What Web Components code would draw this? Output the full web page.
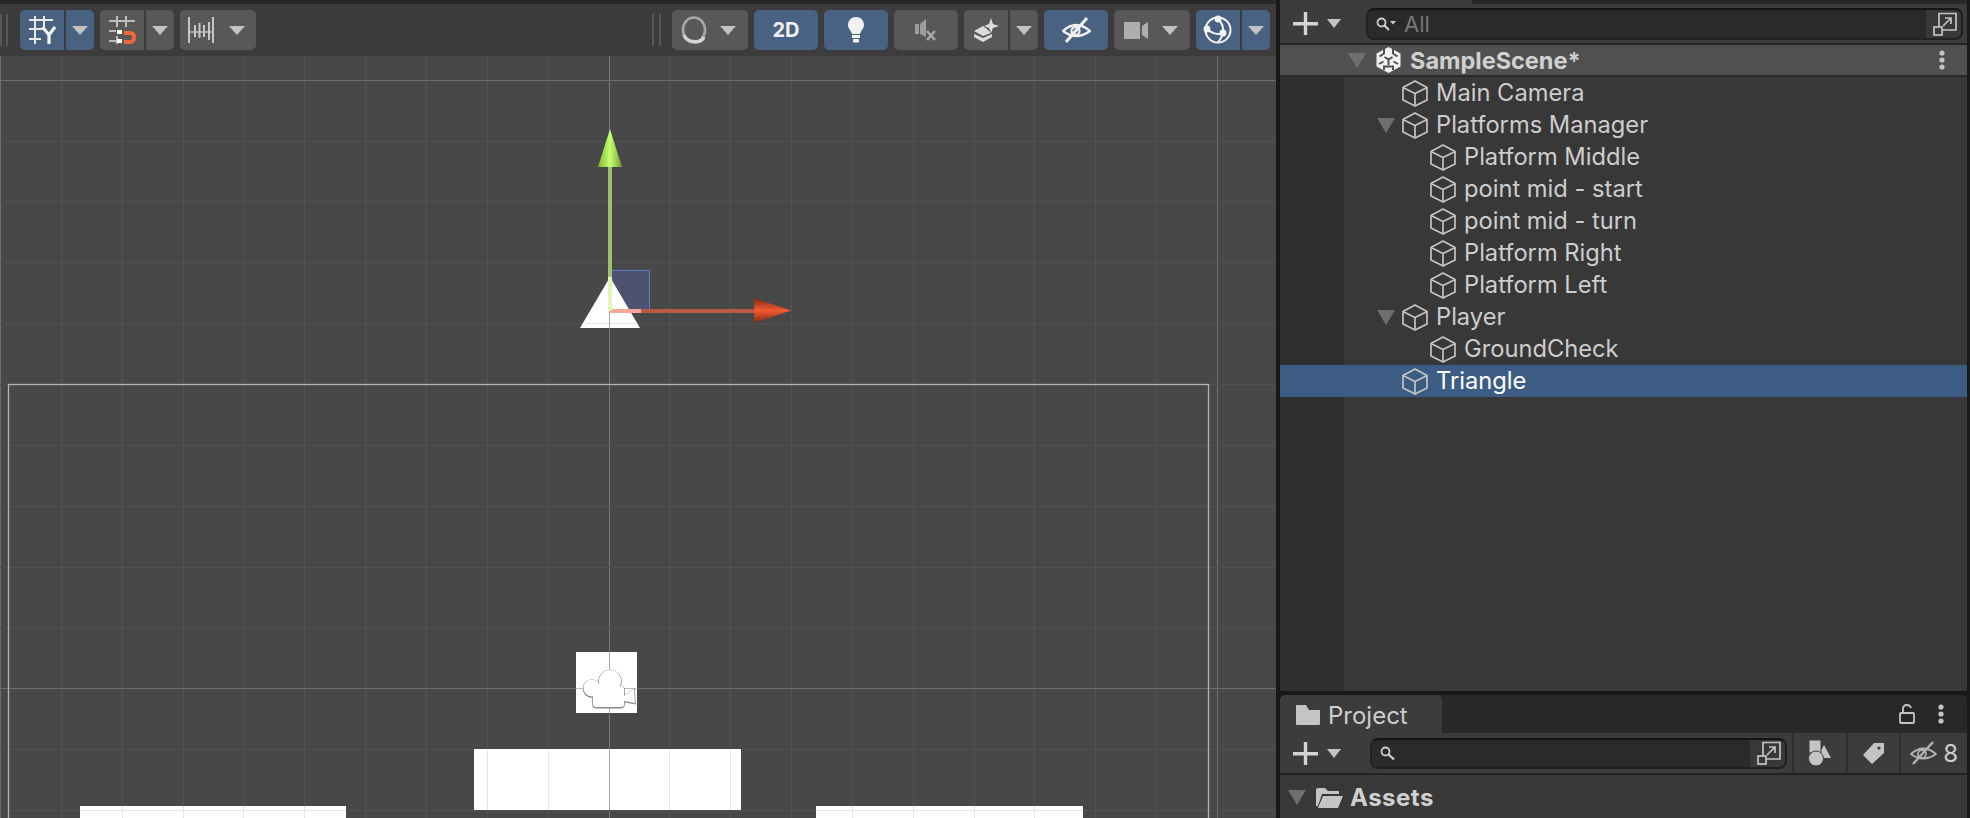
<!DOCTYPE html>
<html>
<head>
<meta charset="utf-8">
<style>
html, body { margin: 0; height: 100%; background: #191919; overflow: hidden; }
body { font-family: Inter, "Liberation Sans", sans-serif; }
unity-editor { width: 1970px; height: 818px; }
</style>
</head>
<body>
<unity-editor>
  <scene-panel slot="scene"></scene-panel>
  <hierarchy-panel slot="hierarchy"></hierarchy-panel>
  <project-panel slot="project"></project-panel>
</unity-editor>

<script>
const ICONS = {
    arrow: `<svg width="16" height="9" viewBox="0 0 16 9"><path d="M0 0H16L8 9Z" fill="#c2c2c2"/></svg>`,
    gridY: `<svg width="28" height="28" viewBox="0 0 28 28" fill="none" stroke="#e8e8e8" stroke-width="2"><path d="M1 4H25M1 13H15M1 23H13M7 0V28M16 0V11"/><path d="M14.5 11L21 19L27 11M21 19V28" stroke="#f4f4f4" stroke-width="3.2"/></svg>`,
    snap: `<svg width="28" height="28" viewBox="0 0 28 28" fill="none" stroke="#bdbdbd" stroke-width="2"><path d="M1 5H27M1 15H8M1 25H8M9 0V11M9 20V28M18 0V11"/><path d="M16 17H22Q26 17 26 21.5T22 26H16" stroke="#ee6a3a" stroke-width="4"/><path d="M9 14h5v4h-5zM9 23h5v4h-5z" fill="#fff" stroke="none"/></svg>`,
    ruler: `<svg width="26" height="26" viewBox="0 0 26 26" fill="none" stroke="#c6c6c6" stroke-width="2"><path d="M1 0V26M25 0V26"/><path d="M1 15H25" stroke-width="1.4"/><path d="M7 8V20M11.5 6V21M16 8V20M21 5V23"/></svg>`,
    shading: `<svg width="26" height="28" viewBox="0 0 26 28" fill="none"><ellipse cx="13" cy="14" rx="11" ry="12.5" stroke="#a8a8a8" stroke-width="2.6"/><path d="M3 19C6 27 20 28 23 21" stroke="#d4d4d4" stroke-width="3.4"/></svg>`,
    bulb: `<svg width="16" height="26" viewBox="0 0 16 26"><path d="M8 0C3.5 0 0 3.5 0 8C0 12 3 13 4 17H12C13 13 16 12 16 8C16 3.5 12.5 0 8 0Z" fill="#f2f2f2"/><rect x="4" y="18" width="8" height="3" fill="#f2f2f2"/><rect x="5" y="22" width="6" height="3.5" rx="1" fill="#f2f2f2"/></svg>`,
    mute: `<svg width="24" height="22" viewBox="0 0 24 22"><path d="M1 5H5V15H1ZM6 5L12 0V18L6 15Z" fill="#9c9c9c"/><path d="M13 12L21 21M21 12L13 21" stroke="#a8a8a8" stroke-width="2.6"/></svg>`,
    layers: `<svg width="25" height="24" viewBox="0 0 25 24"><path d="M17 0L19 6L25 8L19 10L17 15L15 10L10 8L15 6Z" fill="#dcdcdc"/><path d="M9 8L13 11L17 15L9 18L0 13Z" fill="#dcdcdc"/><path d="M0 16L9 20L18 16V19L9 24L0 19Z" fill="#dcdcdc"/></svg>`,
    hidden: `<svg width="29" height="26" viewBox="0 0 29 26" fill="none" stroke="#f0f0f0" stroke-width="2.3"><path d="M1 14Q14 2 28 14Q14 24 1 14Z"/><circle cx="13.5" cy="14" r="4"/><path d="M25 1L4 25" stroke-width="3"/></svg>`,
    camera: `<svg width="24" height="17" viewBox="0 0 24 17"><rect x="0" y="0" width="16" height="17" fill="#aeaeae"/><path d="M18 4L24 0V17L18 13Z" fill="#aeaeae"/></svg>`,
    gizmo: `<svg width="30" height="30" viewBox="0 0 30 30" fill="none" stroke="#f4f4f4" stroke-width="2"><circle cx="15" cy="15" r="12.5"/><path d="M15 4C19 8 21 13 20 18C16 20 9 19 4 14M20 18C19 22 17 25 15 27.5"/><g fill="#f4f4f4" stroke="none"><circle cx="15" cy="4" r="3.4"/><circle cx="4" cy="14" r="3.4"/><circle cx="20" cy="18" r="3.4"/></g></svg>`,
    plus: `<svg width="25" height="23" viewBox="0 0 25 23"><path d="M0 10H25V13.4H0ZM10.8 0H14.2V23H10.8Z" fill="#d4d4d4"/></svg>`,
    smallArrow: `<svg width="14" height="9" viewBox="0 0 14 9"><path d="M0 0H14L7 9Z" fill="#c4c4c4"/></svg>`,
    searchDrop: `<svg width="20" height="14" viewBox="0 0 20 14" fill="none"><circle cx="5.5" cy="5.5" r="4" stroke="#cfcfcf" stroke-width="1.8"/><path d="M8.5 8.5L13 13" stroke="#cfcfcf" stroke-width="2.2"/><path d="M14 4H20L17 7.5Z" fill="#cfcfcf"/></svg>`,
    search: `<svg width="15" height="14" viewBox="0 0 15 14" fill="none"><circle cx="5.5" cy="5.5" r="4" stroke="#cfcfcf" stroke-width="1.8"/><path d="M8.5 8.5L14 13.4" stroke="#cfcfcf" stroke-width="2.2"/></svg>`,
    maximize: `<svg width="24" height="24" viewBox="0 0 24 24" fill="none" stroke="#c4c4c4" stroke-width="1.7"><path d="M6 15V1.5H23V18H9"/><rect x="1" y="15" width="8" height="8"/><path d="M10 14L18 6M12 6H18V12"/></svg>`,
    unity: `<svg width="25" height="26" viewBox="0 0 25 26"><path d="M12.5 0L24.5 6.5V19.5L12.5 26L.5 19.5V6.5Z" fill="#f0f0f0"/><path d="M8 1.5V6.5L3.5 9.5M17 1.5V6.5L21.5 9.5M8.5 10L12.5 12.5L16.5 10M12.5 12.5V18M3 17L7.5 14.5M22 17L17.5 14.5M8 23V19.5H17V23" stroke="#505050" stroke-width="2" fill="none"/></svg>`,
    cube: `<svg width="26" height="27" viewBox="0 0 26 27" fill="none" stroke="#c4c4c4" stroke-width="1.7" stroke-linejoin="round"><path d="M13 1L25 7.5V20L13 26L1 20V7.5Z"/><path d="M1 7.5L13 13.5L25 7.5M13 13.5V26"/></svg>`,
    kebab: `<svg width="6" height="20" viewBox="0 0 6 20" fill="#c4c4c4"><circle cx="3" cy="3" r="2.6"/><circle cx="3" cy="10" r="2.6"/><circle cx="3" cy="17" r="2.6"/></svg>`,
    folder: `<svg width="24" height="20" viewBox="0 0 24 20"><path d="M0 1Q0 0 1 0H10L13 5H24V19Q24 20 23 20H1Q0 20 0 19Z" fill="#c4c4c4"/></svg>`,
    lock: `<svg width="16" height="20" viewBox="0 0 16 20" fill="none" stroke="#c4c4c4" stroke-width="1.8"><rect x="1" y="9" width="14" height="10" rx="1"/><path d="M4 9V5Q4 1 8 1Q11 1 12 4"/></svg>`,
    shapes: `<svg width="23" height="26" viewBox="0 0 23 26" fill="#c4c4c4"><path d="M16 5L23 18H9Z"/><rect x="1" y="0" width="12" height="13" stroke="#3c3c3c"/><circle cx="8" cy="18.5" r="7.5" stroke="#3c3c3c"/></svg>`,
    tag: `<svg width="21" height="22" viewBox="0 0 21 22"><path fill-rule="evenodd" d="M11 1H21V11L9 22L0 13ZM16 4.5A1.6 1.6 0 1 0 16 7.7A1.6 1.6 0 1 0 16 4.5Z" fill="#c4c4c4"/></svg>`,
    eyeOff: `<svg width="27" height="24" viewBox="0 0 27 24" fill="none" stroke="#b4b4b4" stroke-width="1.8"><path d="M1 13Q13 2 26 13Q13 22 1 13Z"/><circle cx="12" cy="13" r="4"/><path d="M23 1L3 23" stroke-width="2.4"/></svg>`,
    openFolder: `<svg width="27" height="20" viewBox="0 0 27 20"><path d="M0 2Q0 0 2 0H9L12 3H23V6H6L2 18H0Z" fill="#c4c4c4"/><path d="M7 8H27L22 20H2Z" fill="#c4c4c4"/></svg>`,
    expand: `<svg width="18" height="15" viewBox="0 0 18 15"><path d="M0 0H18L9 15Z" fill="#6f6f6f"/></svg>`
};

class ToolButton extends HTMLElement {
    connectedCallback() {
        const blue = this.hasAttribute("active");
        this.attachShadow({mode: "open"}).innerHTML = `
        <style>
        :host{ display: flex; align-items: center; justify-content: center; height: 40px; box-sizing: border-box;
            background: ${blue ? "#4a6282" : "#585858"}; color: #f0f0f0; font: 700 20px Inter, sans-serif; }
        :host([left]){ border-radius: 5px 0 0 5px; }
        :host([right]){ border-radius: 0 5px 5px 0; }
        :host([round]){ border-radius: 5px; }
        </style>
        <slot></slot>`;
    }
}
customElements.define("tool-button", ToolButton);

class SceneToolbar extends HTMLElement {
    connectedCallback() {
        const b = (w, attrs, inner, extra = "") => `<tool-button style="width:${w}px;${extra}" ${attrs}>${inner}</tool-button>`;
        this.attachShadow({mode: "open"}).innerHTML = `
        <style>
        :host{ display: flex; height: 52px; box-sizing: border-box; padding-top: 6px; background: #3c3c3c; align-items: flex-start; position: relative; }
        .group{ display: flex; gap: 2px; }
        .grip{ width: 2px; height: 32px; margin-top: 4px; background: #585858; }
        </style>
        <div class="grip" style="margin-left:0"></div>
        <div class="grip" style="margin-left:4px;margin-right:12px"></div>
        <div class="group">${b(44, "left active", ICONS.gridY)}${b(28, "right active", ICONS.arrow)}</div>
        <div class="group" style="margin-left:6px">${b(44, "left", ICONS.snap)}${b(28, "right", ICONS.arrow)}</div>
        <div class="group" style="margin-left:6px">${b(76, "round", ICONS.ruler + `<span style="width:15px"></span>` + ICONS.arrow, "padding-right:3px")}</div>
        <div class="grip" style="margin-left:396px"></div>
        <div class="grip" style="margin-left:5px;margin-right:11px"></div>
        <div class="group">${b(76, "round", ICONS.shading + `<span style="width:13px"></span>` + ICONS.arrow, "padding-right:3px")}</div>
        <div class="group" style="margin-left:6px">${b(64, "round active", "2D")}</div>
        <div class="group" style="margin-left:6px">${b(64, "round active", ICONS.bulb)}</div>
        <div class="group" style="margin-left:6px">${b(64, "round", ICONS.mute)}</div>
        <div class="group" style="margin-left:6px">${b(44, "left", ICONS.layers)}${b(28, "right", ICONS.arrow)}</div>
        <div class="group" style="margin-left:6px">${b(64, "round active", ICONS.hidden)}</div>
        <div class="group" style="margin-left:6px">${b(76, "round", ICONS.camera + `<span style="width:14px"></span>` + ICONS.arrow, "padding-right:2px")}</div>
        <div class="group" style="margin-left:6px">${b(44, "left active", ICONS.gizmo)}${b(28, "right active", ICONS.arrow)}</div>`;
    }
}
customElements.define("scene-toolbar", SceneToolbar);

class SceneView extends HTMLElement {
    connectedCallback() {
        // scene coordinates are window coordinates minus the 56px of bars above
        const xs = [], ys = [];
        for (let i = 0; i <= 21; i++) xs.push(Math.round(i * 60.85));
        for (let i = 0; i <= 12; i++) ys.push(688 - Math.round(i * 60.85) + 122 - 56);
        const lineX = x => x === 609 ? "#787878" : (x === 0 || x === 1217) ? "#6e6e6e" : "#525252";
        const lineY = y => (y === 24 || y === 632) ? "#6e6e6e" : "#525252";
        const grid = xs.map(x => `<rect x="${x}" y="0" width="1" height="762" fill="${lineX(x)}"/>`).join("")
            + ys.map(y => `<rect x="0" y="${y}" width="1276" height="1" fill="${lineY(y)}"/>`).join("");
        const onWhite = xs.filter(x => x > 80).map(x => `<rect x="${x}" y="0" width="1" height="762" fill="#e6e6e6"/>`).join("");
        const cam = `<circle cx="592" cy="632" r="8.5"/><circle cx="610" cy="625" r="11"/><rect x="593" y="630" width="31" height="21" rx="3"/><path d="M624 640L634 633L635 647L624 645Z"/>`;
        this.attachShadow({mode: "open"}).innerHTML = `
        <style>
        :host{ display: block; height: 762px; background: #484848; overflow: hidden; }
        svg{ display: block; }
        </style>
        <svg width="1276" height="762" viewBox="0 0 1276 762">
            <defs>
                <linearGradient id="g" x1="0" x2="1" y1="0" y2="0"><stop offset="0" stop-color="#7fb53a"/><stop offset=".5" stop-color="#c6ff6e"/><stop offset="1" stop-color="#6f9e34"/></linearGradient>
                <linearGradient id="r" x1="0" x2="0" y1="0" y2="1"><stop offset="0" stop-color="#7a2a14"/><stop offset=".5" stop-color="#f25a30"/><stop offset="1" stop-color="#7a2a14"/></linearGradient>
                <clipPath id="plat"><rect x="474" y="693" width="267" height="61"/><rect x="80" y="750" width="266" height="12"/><rect x="816" y="750" width="267" height="12"/><path d="M610 221L640 272H580Z"/></clipPath>
                <filter id="soft"><feGaussianBlur stdDeviation=".7"/></filter>
            </defs>
            ${grid}
            <rect x="8.5" y="328.5" width="1200" height="600" fill="none" stroke="#b4b4b4" stroke-width="1.3"/>
            <rect x="610.5" y="214.5" width="39" height="40" fill="#4c5270" stroke="#5a7cc8" stroke-width="1"/>
            <rect x="474" y="693" width="267" height="61" fill="#fff"/>
            <rect x="80" y="750" width="266" height="12" fill="#fff"/>
            <rect x="816" y="750" width="267" height="12" fill="#fff"/>
            <rect x="576" y="596" width="61" height="61" fill="#fff"/>
            <path d="M610 221L640 272H580Z" fill="#fff"/>
            <g clip-path="url(#plat)">${onWhite}<rect x="0" y="267" width="1276" height="1" fill="#e6e6e6"/><rect x="0" y="754" width="1276" height="1" fill="#e6e6e6"/><rect x="609" y="0" width="1" height="762" fill="#a8a8a8"/></g>
            <rect x="609" y="596" width="1" height="61" fill="#a8a8a8"/>
            <rect x="576" y="632" width="61" height="1" fill="#bcbcbc"/>
            <g fill="#8c8c8c" stroke="#8c8c8c" stroke-width="1.6" filter="url(#soft)" transform="translate(0 .6)">${cam}</g>
            <g fill="#fff">${cam}</g>
            <rect x="610" y="253" width="144" height="4" fill="#ba5a42"/>
            <rect x="610" y="253" width="31" height="4" fill="#f4a898"/>
            <path d="M754 242L791 254.5L754 267Z" fill="url(#r)"/>
            <rect x="608" y="111" width="4" height="144" fill="#9cc06c"/>
            <rect x="608" y="221" width="4" height="34" fill="#e4f4b4"/>
            <path d="M610 73L622 111H598Z" fill="url(#g)"/>
        </svg>`;
    }
}
customElements.define("scene-view", SceneView);

class ScenePanel extends HTMLElement {
    connectedCallback() {
        this.attachShadow({mode: "open"}).innerHTML = `
        <style>
        :host{ display: block; width: 1276px; }
        .tabs{ height: 4px; background: #282828; }
        </style>
        <div class="tabs"></div>
        <scene-toolbar></scene-toolbar>
        <scene-view></scene-view>`;
    }
}
customElements.define("scene-panel", ScenePanel);

class SearchField extends HTMLElement {
    connectedCallback() {
        const h = this.getAttribute("h");
        this.attachShadow({mode: "open"}).innerHTML = `
        <style>
        :host{ display: flex; align-items: center; height: ${h}px; box-sizing: border-box; background: #2a2a2a; border: 2px solid #212121; border-top-color: #141414; border-radius: 8px; overflow: hidden; font-size: 22px; color: #777; }
        .icon{ display: flex; padding-left: 8px; }
        .text{ flex: 1; padding-left: 8px; }
        .btn{ display: flex; align-items: center; justify-content: center; width: 35px; box-sizing: border-box; padding-left: 3px; align-self: stretch; background: #383838; }
        </style>
        <div class="icon"><slot name="icon"></slot></div>
        <div class="text"><slot></slot></div>
        <div class="btn">${ICONS.maximize}</div>`;
    }
}
customElements.define("search-field", SearchField);

class HierarchyRow extends HTMLElement {
    connectedCallback() {
        const depth = +this.getAttribute("depth") || 0;
        const open = this.hasAttribute("open");
        this.attachShadow({mode: "open"}).innerHTML = `
        <style>
        :host{ display: flex; align-items: center; height: 32px; padding-left: ${122 + depth * 28}px; gap: 8px; color: #cdcdcd; font-size: 23.7px; position: relative; white-space: nowrap; }
        :host([selected]){ background: #3c5c84; color: #fff; }
        .tw{ position: absolute; left: ${97}px; top: 9px; display: ${open ? "block" : "none"}; }
        svg{ display: block; }
        span.label{ position: relative; top: -1px; }
        </style>
        <span class="tw">${ICONS.expand}</span>
        ${ICONS.cube}
        <span class="label"><slot></slot></span>`;
    }
}
customElements.define("hierarchy-row", HierarchyRow);

class HierarchyPanel extends HTMLElement {
    connectedCallback() {
        this.attachShadow({mode: "open"}).innerHTML = `
        <style>
        :host{ display: flex; flex-direction: column; height: 691px; box-sizing: border-box; background: #383838; }
        .tabs{ height: 4px; flex: none; background: linear-gradient(90deg, #3c3c3c 192px, #282828 192px); }
        .bar{ flex: none; display: flex; align-items: center; height: 41px; box-sizing: border-box; padding: 0 4px 0 13px; background: #3c3c3c; border-bottom: 2px solid #232323; }
        .plus{ display: flex; align-items: center; gap: 9px; width: 73px; }
        search-field{ flex: 1; }
        .head{ flex: none; display: flex; align-items: center; height: 32px; box-sizing: border-box; border-bottom: 2px solid #2a2a2a; background: #505050; padding: 0 22px 0 68px; gap: 10px; font-size: 23.5px; font-weight: 700; color: #d0d0d0; }
        .head .name{ flex: 1; margin-left: -1px; }
        .rows{ flex: 1; background: linear-gradient(90deg, #2f2f2f 64px, #383838 64px); }
        svg{ display: block; }
        </style>
        <div class="tabs"></div>
        <div class="bar">
            <div class="plus">${ICONS.plus}${ICONS.smallArrow}</div>
            <search-field h="32"><span slot="icon">${ICONS.searchDrop}</span>All</search-field>
        </div>
        <div class="head">${ICONS.expand}${ICONS.unity}<span class="name">SampleScene*</span>${ICONS.kebab}</div>
        <div class="rows">
            <hierarchy-row>Main Camera</hierarchy-row>
            <hierarchy-row open>Platforms Manager</hierarchy-row>
            <hierarchy-row depth="1">Platform Middle</hierarchy-row>
            <hierarchy-row depth="1">point mid - start</hierarchy-row>
            <hierarchy-row depth="1">point mid - turn</hierarchy-row>
            <hierarchy-row depth="1">Platform Right</hierarchy-row>
            <hierarchy-row depth="1">Platform Left</hierarchy-row>
            <hierarchy-row open>Player</hierarchy-row>
            <hierarchy-row depth="1">GroundCheck</hierarchy-row>
            <hierarchy-row selected>Triangle</hierarchy-row>
        </div>`;
    }
}
customElements.define("hierarchy-panel", HierarchyPanel);

class ProjectPanel extends HTMLElement {
    connectedCallback() {
        this.attachShadow({mode: "open"}).innerHTML = `
        <style>
        :host{ display: flex; flex-direction: column; flex: 1; background: #383838; font-size: 24px; color: #cdcdcd; border-radius: 5px 5px 0 0; overflow: hidden; }
        .tabs{ display: flex; height: 38px; background: #282828; flex: none; align-items: center; }
        .tab{ display: flex; align-items: center; gap: 9px; align-self: stretch; width: 162px; box-sizing: border-box; padding: 1px 0 0 16px; background: #3c3c3c; border-radius: 5px 5px 0 0; }
        .tab span{ padding-top: 1px; margin-left: -1px; }
        .tools{ margin-left: auto; display: flex; align-items: center; gap: 23px; padding-right: 23px; }
        .bar{ flex: none; display: flex; align-items: center; height: 42px; box-sizing: border-box; padding-left: 13px; background: #3c3c3c; border-bottom: 2px solid #232323; }
        .plus{ display: flex; align-items: center; gap: 9px; width: 77px; }
        search-field{ width: 419px; }
        .seg{ display: flex; align-items: center; justify-content: center; gap: 6px; height: 100%; width: 52px; border-left: 2px solid #2e2e2e; }
        .assets{ display: flex; align-items: center; height: 44px; padding: 2px 0 0 8px; box-sizing: border-box; font-weight: 700; color: #d0d0d0; }
        svg{ display: block; }
        </style>
        <div class="tabs">
            <div class="tab">${ICONS.folder}<span>Project</span></div>
            <div class="tools">${ICONS.lock}${ICONS.kebab}</div>
        </div>
        <div class="bar">
            <div class="plus">${ICONS.plus}${ICONS.smallArrow}</div>
            <search-field h="31"><span slot="icon">${ICONS.search}</span></search-field>
            <div class="seg" style="margin-left:5px">${ICONS.shapes}</div>
            <div class="seg">${ICONS.tag}</div>
            <div class="seg" style="width:66px">${ICONS.eyeOff}<span>8</span></div>
        </div>
        <div class="assets">${ICONS.expand}<span style="width:10px"></span>${ICONS.openFolder}<span style="margin-left:7px;letter-spacing:.5px">Assets</span></div>`;
    }
}
customElements.define("project-panel", ProjectPanel);

class UnityEditor extends HTMLElement {
    constructor() {
        super();
        this.attachShadow({mode: "open"}).innerHTML = `
        <style>
        :host{ display: grid; grid-template-columns: 1276px 687px; column-gap: 4px; background: #191919; }
        .right{ display: flex; flex-direction: column; gap: 4px; height: 818px; }
        </style>
        <slot name="scene"></slot>
        <div class="right">
            <slot name="hierarchy"></slot>
            <slot name="project"></slot>
        </div>`;
    }
}
customElements.define("unity-editor", UnityEditor);
</script>
</body>
</html>
